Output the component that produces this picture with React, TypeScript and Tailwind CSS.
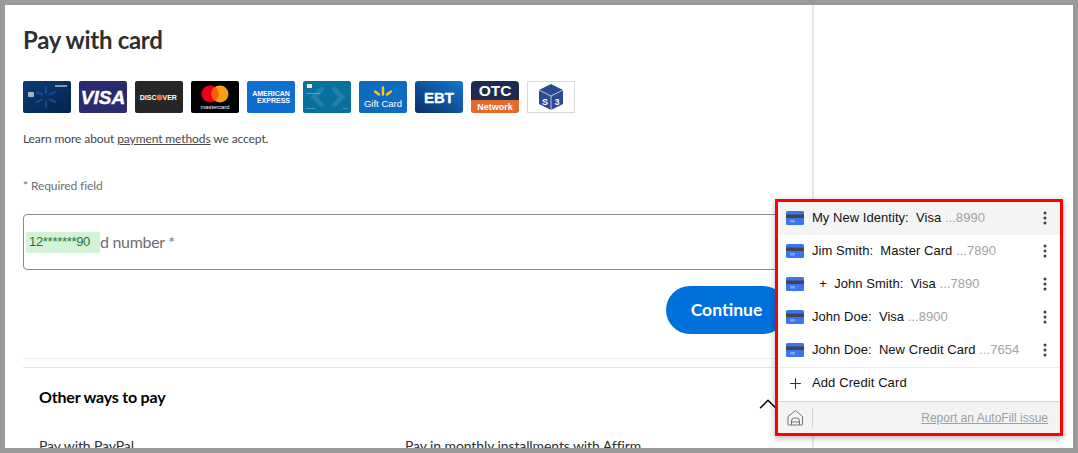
import React from 'react';
import { ChevronUp, Plus } from 'lucide-react';

const bogle = 'font-["Lato",sans-serif]';
const helv = 'font-["Liberation_Sans",Arial,sans-serif]';

const entries = [
  { name: 'My New Identity:  Visa', last: '...8990', active: true },
  { name: 'Jim Smith:  Master Card', last: '...7890' },
  { name: '  +  John Smith:  Visa', last: '...7890' },
  { name: 'John Doe:  Visa', last: '...8900' },
  { name: 'John Doe:  New Credit Card', last: '...7654' },
];

function CardIcon() {
  return (
    <svg width="18" height="14" viewBox="0 0 18 14" className="shrink-0">
      <rect width="18" height="14" rx="1.5" fill="#3a74f5" />
      <rect y="3.500" width="18" height="3.500" fill="#43454b" />
      <rect x="4" y="9" width="5" height="2.500" fill="#7ea6f8" />
    </svg>
  );
}

function Dots() {
  return (
    <svg width="4" height="14" viewBox="0 0 4 14" className="shrink-0">
      <circle cx="2" cy="2" r="1.500" fill="#3c4043" />
      <circle cx="2" cy="7" r="1.500" fill="#3c4043" />
      <circle cx="2" cy="12" r="1.500" fill="#3c4043" />
    </svg>
  );
}

function Logos() {
  const t = { fontFamily: '"Liberation Sans", Arial, sans-serif' };
  return (
    <div className="flex gap-2">
      <svg width="48" height="32" viewBox="0 0 48 32" style={t}>
        <defs>
          <linearGradient id="wm" x1="0" y1="0" x2="1" y2="1">
            <stop offset="0" stopColor="#0a3d78" />
            <stop offset="1" stopColor="#04234d" />
          </linearGradient>
        </defs>
        <rect width="48" height="32" rx="2" fill="url(#wm)" />
        <rect x="5" y="11" width="6" height="5" rx="1" fill="#a9b4bf" />
        <g stroke="#174a86" strokeWidth="2" strokeLinecap="round">
          <path d="M23 6v6M23 20v6M14 11l5 2.500M27 18.500l5 2.500M14 21l5-2.500M27 13.500l5-2.500" />
        </g>
        <rect x="32" y="4" width="12" height="2" fill="#7f97b5" />
      </svg>
      <svg width="48" height="32" viewBox="0 0 48 32" style={t}>
        <rect width="48" height="32" rx="2" fill="#2a2a6e" />
        <text x="24" y="23" textAnchor="middle" fontSize="19" fontWeight="700" fontStyle="italic" fill="#fff" stroke="#fff" strokeWidth="0.400">VISA</text>
      </svg>
      <svg width="48" height="32" viewBox="0 0 48 32" style={t}>
        <rect width="48" height="32" rx="2" fill="#262626" />
        <text x="21.500" y="19" textAnchor="end" fontSize="7" fontWeight="700" fill="#fff">DISC</text>
        <circle cx="24.500" cy="16.500" r="3" fill="#e8682a" />
        <text x="27.500" y="19" fontSize="7" fontWeight="700" fill="#fff">VER</text>
      </svg>
      <svg width="48" height="32" viewBox="0 0 48 32" style={t}>
        <rect width="48" height="32" rx="2" fill="#000" />
        <circle cx="19" cy="13" r="8.500" fill="#eb001b" />
        <circle cx="29" cy="13" r="8.500" fill="#f79e1b" />
        <path d="M24 6a8.500 8.500 0 0 1 0 14a8.500 8.500 0 0 1 0-14z" fill="#ff5f00" />
        <text x="24" y="28" textAnchor="middle" fontSize="5.800" fill="#fff">mastercard</text>
      </svg>
      <svg width="48" height="32" viewBox="0 0 48 32" style={t}>
        <rect width="48" height="32" rx="2" fill="#0f6fd1" />
        <text x="24" y="15" textAnchor="middle" fontSize="7" fontWeight="700" fill="#fff">AMERICAN</text>
        <text x="43" y="21.500" textAnchor="end" fontSize="7" fontWeight="700" fill="#fff">EXPRESS</text>
      </svg>
      <svg width="48" height="32" viewBox="0 0 48 32" style={t}>
        <rect width="48" height="32" rx="2" fill="#07709f" />
        <rect x="4" y="3" width="5" height="4" fill="#f3e4e0" />
        <path d="M20 7l-9 9 9 9M30 7l9 9-9 9" fill="none" stroke="#2480a9" strokeWidth="5" />
        <rect x="3" y="12" width="14" height="1" fill="#5ba3c4" />
        <rect x="3" y="27" width="9" height="1" fill="#4a97ba" />
        <rect x="40" y="27" width="5" height="1" fill="#4a97ba" />
      </svg>
      <svg width="48" height="32" viewBox="0 0 48 32" style={t}>
        <rect width="48" height="32" rx="2" fill="#0d6cc0" />
        <g stroke="#ffc220" strokeWidth="2.400" strokeLinecap="round">
          <path d="M24 6.500v7M16 10.500l4 3M32 10.500l-4 3" />
        </g>
        <text x="24" y="25.500" textAnchor="middle" fontSize="9.500" fill="#fff">Gift Card</text>
      </svg>
      <svg width="48" height="32" viewBox="0 0 48 32" style={t}>
        <defs>
          <linearGradient id="ebt" x1="0" y1="1" x2="1" y2="0">
            <stop offset="0" stopColor="#0a2f66" />
            <stop offset="1" stopColor="#1278d0" />
          </linearGradient>
        </defs>
        <rect width="48" height="32" rx="3" fill="url(#ebt)" />
        <text x="24" y="22" textAnchor="middle" fontSize="15" fontWeight="700" fill="#fff" stroke="#fff" strokeWidth="0.300">EBT</text>
      </svg>
      <svg width="48" height="32" viewBox="0 0 48 32" style={t}>
        <rect width="48" height="32" rx="4" fill="#1c2b4f" />
        <path d="M0 19h48v9a4 4 0 0 1-4 4H4a4 4 0 0 1-4-4z" fill="#e46a2e" />
        <text x="24" y="15" textAnchor="middle" fontSize="15.500" fontWeight="700" fill="#fff">OTC</text>
        <text x="24" y="28.500" textAnchor="middle" fontSize="9" fontWeight="700" fill="#fff">Network</text>
      </svg>
      <svg width="48" height="32" viewBox="0 0 48 32" style={t}>
        <rect x="0.500" y="0.500" width="47" height="31" fill="#fff" stroke="#d9d9d9" />
        <path d="M24 3l12 6v14l-12 6-12-6V9z" fill="#2b4a8f" />
        <path d="M24 15v14M12 9l12 6 12-6" stroke="#dfe6f2" strokeWidth="0.800" fill="none" />
        <text x="18" y="24" textAnchor="middle" fontSize="9" fontWeight="700" fill="#fff">S</text>
        <text x="30" y="24" textAnchor="middle" fontSize="9" fontWeight="700" fill="#fff">3</text>
      </svg>
    </div>
  );
}

function AutofillPopup() {
  return (
    <div className={`absolute left-[770px] top-[194px] w-[288px] h-[237px] border-[3px] border-[#f00] bg-white shadow-[0_2px_6px_rgba(0,0,0,0.3)] flex flex-col ${helv}`}>
      {entries.map((e) => (
        <div
          key={e.last + e.name}
          className={`h-[33px] shrink-0 flex items-center pb-[2px] pl-[8px] pr-[13px] text-[13px] tracking-[0.04px] ${e.active ? 'bg-[#f4f4f4]' : ''}`}
        >
          <CardIcon />
          <span className="ml-[8px] flex-1 whitespace-pre text-[#111]">
            {e.name} <span className="text-[#a3a3a3]">{e.last}</span>
          </span>
          <Dots />
        </div>
      ))}
      <div className="h-[34px] shrink-0 flex items-center pb-[3px] pl-[8px] border-t border-[#eeeeee] text-[13px] tracking-[0.1px] text-[#111]">
        <span className="w-[18px] flex justify-center">
          <Plus size={17} strokeWidth={1.500} className="text-[#333]" />
        </span>
        <span className="ml-[8px]">Add Credit Card</span>
      </div>
      <div className="flex-1 flex items-center border-t border-[#d4d4d4] bg-[#f3f3f3] pl-[9px] pr-[12px]">
        <svg width="17" height="17" viewBox="0 0 17 17" fill="none" stroke="#757575" strokeWidth="1">
          <path d="M1 15.500V7.500L8.500 1.500l7 6v8a0.500 0.500 0 0 1-0.500 0.500H1.500z" strokeLinejoin="round" />
          <path d="M4.500 16v-4a3 3 0 0 1 3-3h2a3 3 0 0 1 3 3v4M4.500 13h8" />
        </svg>
        <span className="ml-[8px] h-[20px] w-px bg-[#d4d4d4]" />
        <span className="ml-auto text-[12px] text-[#a0a0a0] underline">Report an AutoFill issue</span>
      </div>
    </div>
  );
}

export default function App() {
  return (
    <div className="relative w-[1078px] h-[453px] border-[5px] border-[#999999] bg-white overflow-hidden">
      <div className={`w-[809px] h-full border-r-2 border-[#e6e6e6] pl-[18px] pr-[24px] overflow-hidden ${bogle}`}>
        <h1 className="mt-[19px] text-[24px] leading-[32px] font-bold tracking-[-0.3px] text-[#2e2f32]">Pay with card</h1>
        <div className="mt-[25px]">
          <Logos />
        </div>
        <p className="mt-[18px] text-[12px] leading-[16px] tracking-[-0.1px] text-[#46474a]">
          Learn more about <span className="underline">payment methods</span> we accept.
        </p>
        <p className="mt-[31px] text-[12px] leading-[16px] tracking-[-0.1px] text-[#6d6e71]">* Required field</p>
        <div className="mt-[20px] h-[56px] rounded-[4px] border border-[#8a8b8e] flex items-center pl-[2px]">
          <span className={`h-[21px] w-[74px] flex items-center pl-[3px] rounded-[2px] bg-[#d3f3d7] text-[13px] tracking-[-0.3px] text-[#1f7a2e] ${helv}`}>
            12*******90
          </span>
          <span className="text-[16px] tracking-[-0.3px] text-[#6d6e71]">d number *</span>
        </div>
        <div className="mt-[16px] flex justify-end">
          <button className="w-[121px] h-[48px] mr-[1px] rounded-full bg-[#0071dc] text-white text-[17.5px] font-bold">
            Continue
          </button>
        </div>
        <div className="mt-[24px] h-px bg-[#efefef]" />
        <div className="mt-[8px] h-px bg-[#e3e4e5]" />
        <div className="flex items-start justify-between pl-[16px]">
          <h2 className="mt-[19px] text-[16px] leading-[20px] font-bold tracking-[-0.2px] text-black">Other ways to pay</h2>
          <ChevronUp size={30} strokeWidth={1.200} className="mt-[21px] mr-[5px] text-black" />
        </div>
        <div className="mt-[17px] pl-[16px] flex text-[14px] leading-[20px] tracking-[-0.1px] text-[#2e2f32]">
          <span className="w-[366px]">Pay with PayPal</span>
          <span>Pay in monthly installments with Affirm</span>
        </div>
      </div>
      <AutofillPopup />
    </div>
  );
}
